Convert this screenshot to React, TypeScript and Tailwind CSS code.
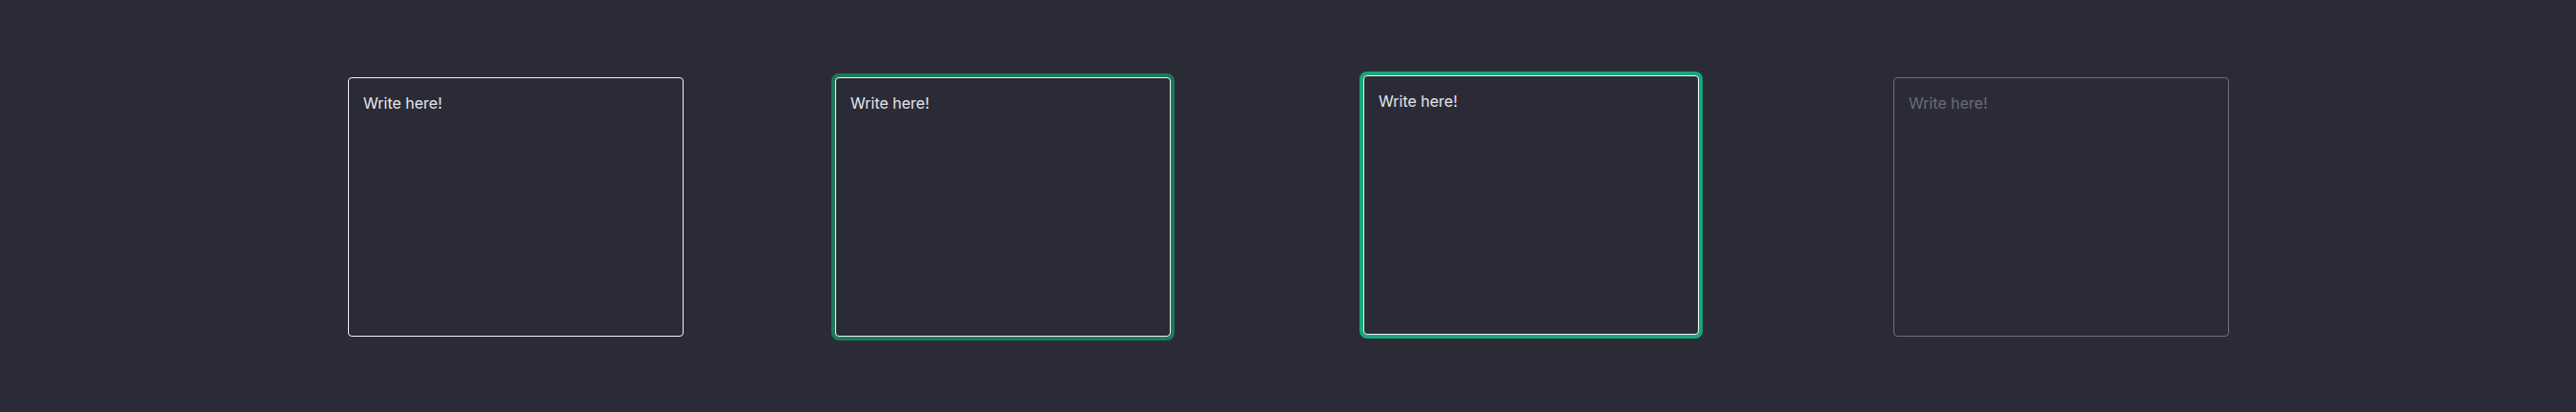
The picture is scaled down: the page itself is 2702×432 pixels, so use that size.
import React from "react";

const base =
  "block w-[352px] h-[272px] resize-none rounded-[4px] border bg-[#2b2b37] px-[15px] pt-[15px] pb-[13px] text-[16px] leading-[22px] outline-none";

export default function App() {
  return (
    <div
      className="flex h-[432px] w-full items-start bg-[#2b2b37] pl-[365px] pt-[81px]"
      style={{ fontFamily: "Inter, 'Noto Sans', sans-serif" }}
    >
      {/* default */}
      <textarea
        className={`${base} border-[#f2f2f5] text-[#e6e6ea] placeholder:text-[#e6e6ea]`}
        placeholder="Write here!"
      />
      {/* hover */}
      <textarea
        className={`${base} ml-[159px] border-[#f2f2f5] text-[#e6e6ea] placeholder:text-[#e6e6ea] shadow-[0_0_0_4px_#1e7a5a]`}
        placeholder="Write here!"
      />
      {/* focus */}
      <textarea
        className={`${base} ml-[202px] -translate-y-[2px] border-[#f2f2f5] text-[#e6e6ea] placeholder:text-[#e6e6ea] shadow-[0_0_0_4px_#16a87a]`}
        placeholder="Write here!"
      />
      {/* disabled */}
      <textarea
        className={`${base} ml-[204px] border-[#6e6e7e] text-[#6b6b78] placeholder:text-[#6b6b78]`}
        placeholder="Write here!"
        disabled
      />
    </div>
  );
}
